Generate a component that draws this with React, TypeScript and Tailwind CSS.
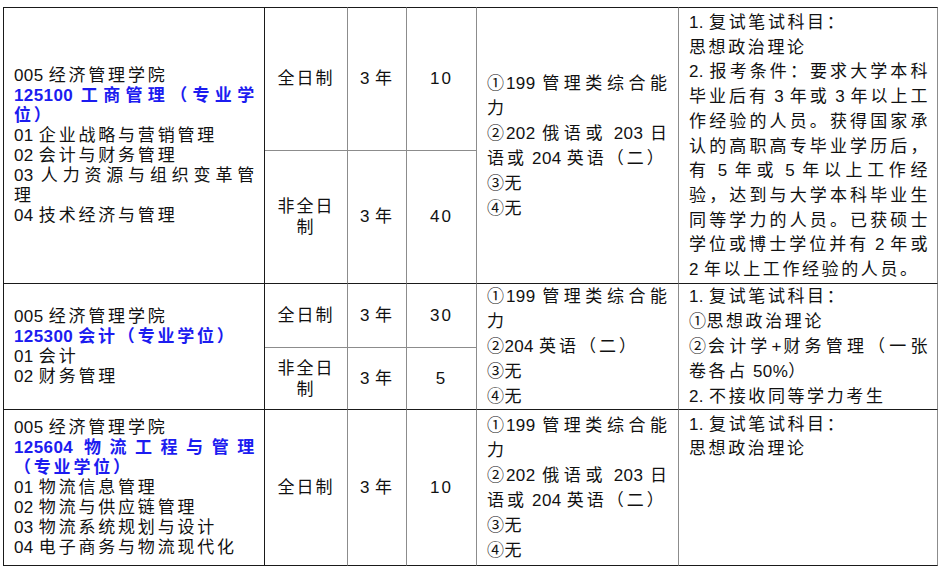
import React from 'react';

// split a line into latin/circled-number runs and CJK runs so only CJK gets the wide grid spacing
const runs = (text: string) =>
  text
    .split(/([\x20-\x7e\u2460-\u2473]+)/)
    .filter(Boolean)
    .map((part, i) =>
      /^[\x20-\x7e\u2460-\u2473]+$/.test(part) ? (
        <span key={i} className="tracking-[0.4px]">
          {part}
        </span>
      ) : (
        <span key={i}>{part}</span>
      ),
    );

type LineProps = { text: string; full?: boolean; blue?: boolean };

const Line = ({ text, full, blue }: LineProps) => (
  <div
    className={
      (full ? 'text-justify [text-align-last:justify] ' : '') +
      (blue ? 'font-bold text-[#1c1cf0]' : '')
    }
  >
    {runs(text)}
  </div>
);

const topEdge = 'border-t border-t-[#1a1a1a]';
const c1 =
  'border-b border-l border-r border-[#1a1a1a] pl-[10px] pr-[7px] align-middle text-left leading-[20px] tracking-[2.8px]';
const midUpper =
  'border-b border-r border-b-[#8c8c8c] border-r-[#8c8c8c] align-middle text-center tracking-[2px]';
const midLower =
  'border-b border-r border-b-[#1a1a1a] border-r-[#8c8c8c] align-middle text-center tracking-[2px]';
const c5 =
  'border-b border-r border-b-[#1a1a1a] border-r-[#8c8c8c] pl-[10px] pr-[8px] align-middle text-left leading-[25px] tracking-[3px]';
const c6 =
  'border-b border-r border-b-[#1a1a1a] border-r-[#8c8c8c] pl-[10px] pr-[7px] align-top text-left tracking-[2.6px]';

const Mode = ({ part }: { part: boolean }) =>
  part ? (
    <div className="leading-[21px]">
      <div>非全日</div>
      <div>制</div>
    </div>
  ) : (
    <span>全日制</span>
  );

export default function App() {
  return (
    <div className="min-h-screen bg-white pl-[3px] pt-[7px] font-['Liberation_Sans','Noto_Sans_CJK_SC',sans-serif] text-[17px] text-[#111]">
      <table className="w-[935px] table-fixed border-separate border-spacing-0">
        <colgroup>
          <col className="w-[262px]" />
          <col className="w-[83px]" />
          <col className="w-[59px]" />
          <col className="w-[70px]" />
          <col className="w-[202px]" />
          <col className="w-[259px]" />
        </colgroup>
        <tbody>
          <tr className="h-[144px]">
            <td rowSpan={2} className={`${c1} ${topEdge}`}>
              <Line text="005 经济管理学院" />
              <Line text="125100 工商管理（专业学" full blue />
              <Line text="位）" blue />
              <Line text="01 企业战略与营销管理" />
              <Line text="02 会计与财务管理" />
              <Line text="03 人力资源与组织变革管" full />
              <Line text="理" />
              <Line text="04 技术经济与管理" />
            </td>
            <td className={`${midUpper} ${topEdge}`}>
              <Mode part={false} />
            </td>
            <td className={`${midUpper} ${topEdge}`}>{runs('3 年')}</td>
            <td className={`${midUpper} ${topEdge}`}>10</td>
            <td rowSpan={2} className={`${c5} ${topEdge}`}>
              <Line text="①199 管理类综合能" full />
              <Line text="力" />
              <Line text="②202 俄语或 203 日" full />
              <Line text="语或 204 英语（二）" />
              <Line text="③无" />
              <Line text="④无" />
            </td>
            <td rowSpan={2} className={`${c6} ${topEdge} pt-[3px] leading-[24.7px]`}>
              <Line text="1. 复试笔试科目：" />
              <Line text="思想政治理论" />
              <Line text="2. 报考条件：要求大学本科" full />
              <Line text="毕业后有 3 年或 3 年以上工" full />
              <Line text="作经验的人员。获得国家承" full />
              <Line text="认的高职高专毕业学历后，" full />
              <Line text="有 5 年或 5 年以上工作经" full />
              <Line text="验，达到与大学本科毕业生" full />
              <Line text="同等学力的人员。已获硕士" full />
              <Line text="学位或博士学位并有 2 年或" full />
              <Line text="2 年以上工作经验的人员。" />
            </td>
          </tr>
          <tr className="h-[133px]">
            <td className={midLower}>
              <Mode part />
            </td>
            <td className={midLower}>{runs('3 年')}</td>
            <td className={midLower}>40</td>
          </tr>

          <tr className="h-[64px]">
            <td rowSpan={2} className={c1}>
              <Line text="005 经济管理学院" />
              <Line text="125300 会计（专业学位）" blue />
              <Line text="01 会计" />
              <Line text="02 财务管理" />
            </td>
            <td className={midUpper}>
              <Mode part={false} />
            </td>
            <td className={midUpper}>{runs('3 年')}</td>
            <td className={midUpper}>30</td>
            <td rowSpan={2} className={c5}>
              <Line text="①199 管理类综合能" full />
              <Line text="力" />
              <Line text="②204 英语（二）" />
              <Line text="③无" />
              <Line text="④无" />
            </td>
            <td rowSpan={2} className={`${c6} !align-middle leading-[25px]`}>
              <Line text="1. 复试笔试科目：" />
              <Line text="①思想政治理论" />
              <Line text="②会计学+财务管理（一张" full />
              <Line text="卷各占 50%）" />
              <Line text="2. 不接收同等学力考生" />
            </td>
          </tr>
          <tr className="h-[62px]">
            <td className={midLower}>
              <Mode part />
            </td>
            <td className={midLower}>{runs('3 年')}</td>
            <td className={midLower}>5</td>
          </tr>

          <tr className="h-[156px]">
            <td className={c1}>
              <Line text="005 经济管理学院" />
              <Line text="125604 物流工程与管理" full blue />
              <Line text="（专业学位）" blue />
              <Line text="01 物流信息管理" />
              <Line text="02 物流与供应链管理" />
              <Line text="03 物流系统规划与设计" />
              <Line text="04 电子商务与物流现代化" />
            </td>
            <td className={midLower}>
              <Mode part={false} />
            </td>
            <td className={midLower}>{runs('3 年')}</td>
            <td className={midLower}>10</td>
            <td className={c5}>
              <Line text="①199 管理类综合能" full />
              <Line text="力" />
              <Line text="②202 俄语或 203 日" full />
              <Line text="语或 204 英语（二）" />
              <Line text="③无" />
              <Line text="④无" />
            </td>
            <td className={`${c6} pt-[3px] leading-[24px]`}>
              <Line text="1. 复试笔试科目：" />
              <Line text="思想政治理论" />
            </td>
          </tr>
        </tbody>
      </table>
    </div>
  );
}
